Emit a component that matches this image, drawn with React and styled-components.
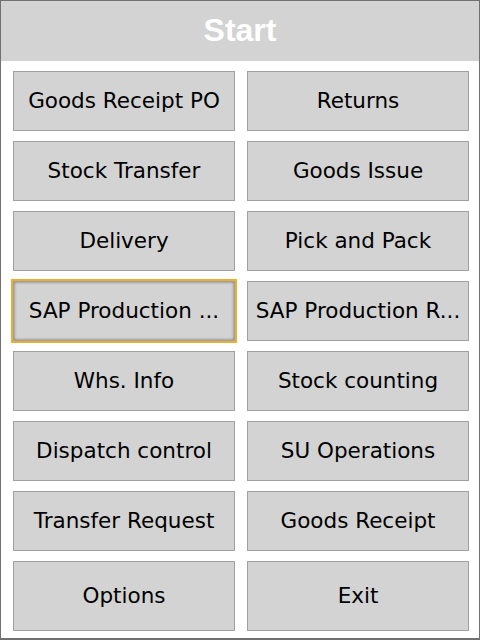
import React from 'react';
import styled, { createGlobalStyle } from 'styled-components';

const GlobalStyle = createGlobalStyle`
  html, body {
    margin: 0;
    padding: 0;
    background: #ffffff;
  }
  * {
    box-sizing: border-box;
  }
`;

const Window = styled.div`
  width: 480px;
  height: 640px;
  border: 1px solid #707070;
  border-bottom-width: 2px;
  background: #ffffff;
  display: flex;
  flex-direction: column;
`;

const Header = styled.div`
  height: 60px;
  background: #d3d3d3;
  color: #ffffff;
  font-family: "Liberation Sans", Arial, sans-serif;
  font-weight: bold;
  font-size: 32px;
  display: flex;
  align-items: center;
  justify-content: center;
  padding-bottom: 2px;
`;

const Grid = styled.div`
  flex: 1;
  display: grid;
  grid-template-columns: 222px 222px;
  grid-template-rows: repeat(7, 60px) 70px;
  column-gap: 12px;
  row-gap: 10px;
  padding: 10px 0 0 12px;
`;

const Button = styled.button`
  border: 1px solid #a0a0a0;
  background: #d3d3d3;
  color: #000000;
  font-family: "DejaVu Sans", Verdana, sans-serif;
  font-size: 21.5px;
  padding: 0 2px 2px;
  white-space: nowrap;
  overflow: hidden;
  outline: ${p => (p.$focused ? '2px solid #e8b030' : 'none')};
  outline-offset: 0;
  box-shadow: ${p => (p.$focused ? 'inset 0 0 3px rgba(0,0,0,0.5)' : 'none')};
  cursor: pointer;
`;

const items = [
  'Goods Receipt PO', 'Returns',
  'Stock Transfer', 'Goods Issue',
  'Delivery', 'Pick and Pack',
  'SAP Production ...', 'SAP Production R...',
  'Whs. Info', 'Stock counting',
  'Dispatch control', 'SU Operations',
  'Transfer Request', 'Goods Receipt',
  'Options', 'Exit',
];

export default function App() {
  return (
    <>
      <GlobalStyle />
      <Window>
        <Header>Start</Header>
        <Grid>
          {items.map((label, i) => (
            <Button key={i} $focused={i === 6}>{label}</Button>
          ))}
        </Grid>
      </Window>
    </>
  );
}
